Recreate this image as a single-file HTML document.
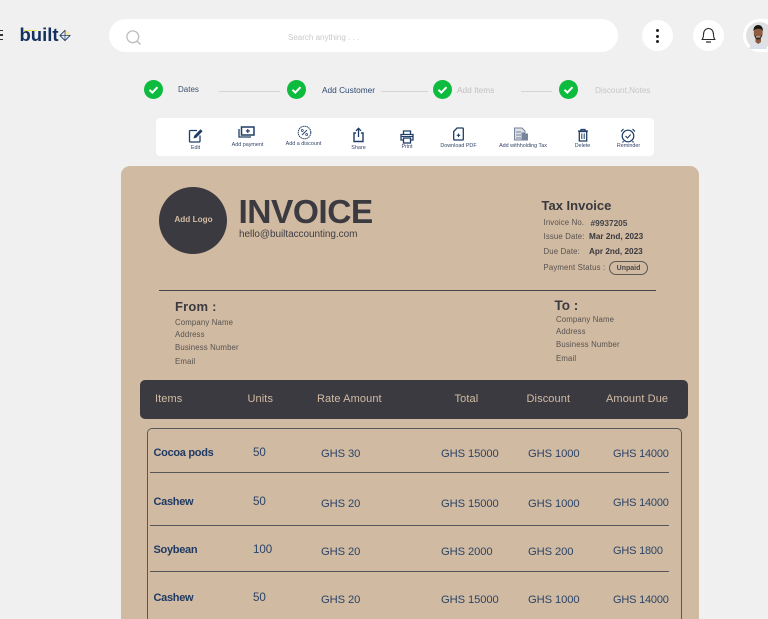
<!DOCTYPE html>
<html style="height:619px;overflow:hidden"><head><meta charset="utf-8"><style>
html,body{margin:0;padding:0}
body{width:768px;height:619px;overflow:hidden;background:#f0f0f0;position:relative;font-family:"Liberation Sans",sans-serif}
#w{position:absolute;left:0;top:0;width:768px;height:619px;overflow:hidden;background:#f0f0f0}
.t{position:absolute;white-space:nowrap;line-height:1}
.a{position:absolute}
.c{transform:translateX(-50%)}
.lbl{font-size:5.4px;color:#34456a}
.i{font-size:7.8px;color:#56524f;letter-spacing:.15px}
.h{font-size:11px;color:#d3bca3;top:394px;letter-spacing:.1px}
.nm{font-size:11px;font-weight:bold;color:#1f3a63;letter-spacing:-.3px}
.v{font-size:11.2px;color:#2a4468;letter-spacing:-.1px}
.u{font-size:11.6px;color:#2a4468;letter-spacing:-.1px}
.d{font-size:11px;color:#2a4468;letter-spacing:-.2px}
.ln{position:absolute;height:1.3px;background:#56565a;left:150px;width:519px}
</style></head><body><div id="w">
<!-- hamburger -->
<div class="a" style="left:0;top:29.500px;width:3px;height:1.700px;background:#333"></div>
<div class="a" style="left:0;top:34px;width:3px;height:1.700px;background:#333"></div>
<div class="a" style="left:0;top:38.500px;width:3px;height:1.700px;background:#333"></div>
<!-- logo -->
<div class="t" style="left:19.500px;top:26px;font-size:18.500px;font-weight:bold;color:#14315f">built</div>
<div class="a" style="left:24px;top:29.500px;width:13px;height:1.200px;background:#efe05a"></div>
<svg class="a" style="left:59px;top:29px" width="12" height="13" viewBox="0 0 13 14"><path d="M6.500 1.500L12 7 6.500 12.500 1 7Z" fill="none" stroke="#23406b" stroke-width="1"/><path d="M6.500 1.500V12.500M1 7H12" stroke="#23406b" stroke-width=".8"/><path d="M7 1.500C10 2 11.500 4 12 6.500H7Z" fill="#f1e8a8"/></svg>
<!-- search -->
<div class="a" style="left:109px;top:19px;width:509px;height:33px;border-radius:17px;background:#fff"></div>
<svg class="a" style="left:125px;top:29px" width="18" height="17" viewBox="0 0 18 17"><circle cx="7.800" cy="7.800" r="5.900" fill="none" stroke="#bdbdbd" stroke-width="1.300"/><path d="M12 12l3.500 3.500" stroke="#bdbdbd" stroke-width="1.500"/></svg>
<div class="t" style="left:288px;top:33.500px;font-size:8px;color:#c9c9c9">Search anything . . .</div>
<!-- top buttons -->
<div class="a" style="left:642px;top:20px;width:31px;height:31px;border-radius:50%;background:#fff"></div>
<div class="a" style="left:656px;top:29px;width:3px;height:3px;border-radius:50%;background:#222"></div>
<div class="a" style="left:656px;top:34.500px;width:3px;height:3px;border-radius:50%;background:#222"></div>
<div class="a" style="left:656px;top:40px;width:3px;height:3px;border-radius:50%;background:#222"></div>
<div class="a" style="left:693px;top:20px;width:31px;height:31px;border-radius:50%;background:#fff"></div>
<svg class="a" style="left:700px;top:26px" width="17" height="19" viewBox="0 0 17 19"><path d="M2 13.500c1.200-1.300 1.500-2.500 1.500-5C3.500 5 5.500 2.500 8.500 2.500S13.500 5 13.500 8.500c0 2.500.3 3.700 1.500 5Z" fill="none" stroke="#2b2b2b" stroke-width="1.100" stroke-linejoin="round"/><path d="M6.500 16h4" stroke="#2b2b2b" stroke-width="1.200" stroke-linecap="round"/></svg>
<div class="a" style="left:743px;top:19px;width:25px;height:33px;border-radius:16.500px 0 0 16.500px;background:#fff"></div>
<svg class="a" style="left:746px;top:22px" width="22" height="27" viewBox="0 0 22 27"><circle cx="13.500" cy="13.500" r="13.500" fill="#e0e0e0"/><path d="M3 27c1-5 4-7 9-7s8 2 9 7Z" fill="#dbe1e8"/><path d="M9.500 15h5.500v5l-2.800 2-2.700-2Z" fill="#8a5a3e"/><ellipse cx="12.200" cy="11" rx="4.500" ry="6" fill="#8f5d3f"/><path d="M7.500 9.500C7.200 5 9.500 3 12.200 3S17.200 5 16.900 9.500C16 7.300 14.500 6.800 12.200 6.800S8.500 7.300 7.500 9.500Z" fill="#1a1715"/><path d="M8 12c1 4.500 2.200 5.500 4.200 5.500s3.200-1 4.200-5.500c-1 2.200-2.200 2-4.200 2S9 14.200 8 12Z" fill="#33251e"/><path d="M10 14.400h4.500v1H10Z" fill="#f2efea"/></svg>
<!-- stepper -->
<svg class="a" style="left:144px;top:80px" width="19" height="19" viewBox="0 0 19 19"><circle cx="9.500" cy="9.500" r="9.500" fill="#0dbb3f"/><path d="M5.500 9.800l2.800 2.800 5.200-5.400" fill="none" stroke="#fff" stroke-width="2"/></svg>
<svg class="a" style="left:287px;top:80px" width="19" height="19" viewBox="0 0 19 19"><circle cx="9.500" cy="9.500" r="9.500" fill="#0dbb3f"/><path d="M5.500 9.800l2.800 2.800 5.200-5.400" fill="none" stroke="#fff" stroke-width="2"/></svg>
<svg class="a" style="left:433px;top:80px" width="19" height="19" viewBox="0 0 19 19"><circle cx="9.500" cy="9.500" r="9.500" fill="#0dbb3f"/><path d="M5.500 9.800l2.800 2.800 5.200-5.400" fill="none" stroke="#fff" stroke-width="2"/></svg>
<svg class="a" style="left:559px;top:80px" width="19" height="19" viewBox="0 0 19 19"><circle cx="9.500" cy="9.500" r="9.500" fill="#0dbb3f"/><path d="M5.500 9.800l2.800 2.800 5.200-5.400" fill="none" stroke="#fff" stroke-width="2"/></svg>
<div class="t" style="left:178px;top:85.500px;font-size:8px;color:#3e5074">Dates</div>
<div class="t" style="left:322px;top:85.500px;font-size:8.300px;color:#2f4a70">Add Customer</div>
<div class="t" style="left:457px;top:86px;font-size:8.300px;color:#c0c0c0">Add Items</div>
<div class="t" style="left:595px;top:86.700px;font-size:8.200px;color:#c6c6c6">Discount,Notes</div>
<div class="a" style="left:219px;top:91px;width:61px;height:1px;background:#d4d4d4"></div>
<div class="a" style="left:381px;top:91px;width:47px;height:1px;background:#d4d4d4"></div>
<div class="a" style="left:521px;top:91px;width:31px;height:1px;background:#d4d4d4"></div>
<!-- toolbar -->
<div class="a" style="left:156px;top:118px;width:498px;height:38px;border-radius:4px;background:#fff"></div>
<svg class="a" style="left:188px;top:128px" width="16" height="15" viewBox="0 0 16 15"><path d="M9 2.500H2.500a1 1 0 0 0-1 1V13a1 1 0 0 0 1 1H11a1 1 0 0 0 1-1V7.500" fill="none" stroke="#1f3d66" stroke-width="1.300"/><path d="M5.500 10.500l.7-2.800L12.500 1.200l2.100 2.100-6.300 6.500Z" fill="#1f3d66"/></svg>
<svg class="a" style="left:238px;top:126px" width="17" height="13" viewBox="0 0 17 13"><rect x="3.500" y="1" width="12.500" height="8" fill="none" stroke="#1f3d66" stroke-width="1.500"/><path d="M9.800 3v4M7.800 5h4" stroke="#1f3d66" stroke-width="1.200"/><path d="M1 3v8h12" fill="none" stroke="#1f3d66" stroke-width="1.300"/></svg>
<svg class="a" style="left:297px;top:125px" width="15" height="15" viewBox="0 0 15 15"><circle cx="7.500" cy="7.500" r="6.300" fill="none" stroke="#1f3d66" stroke-width="1" stroke-dasharray="1.500 .6"/><path d="M5 10l5-5" stroke="#1f3d66" stroke-width=".9"/><circle cx="5.300" cy="5.500" r="1" fill="none" stroke="#1f3d66" stroke-width=".7"/><circle cx="9.700" cy="9.500" r="1" fill="none" stroke="#1f3d66" stroke-width=".7"/></svg>
<svg class="a" style="left:352px;top:127px" width="13" height="16" viewBox="0 0 13 16"><path d="M4 6H2v8.500h9V6H9" fill="none" stroke="#1f3d66" stroke-width="1.400"/><path d="M6.500 10V1.500M4 3.800l2.500-2.500L9 3.800" fill="none" stroke="#1f3d66" stroke-width="1.300"/></svg>
<svg class="a" style="left:400px;top:130px" width="14" height="14" viewBox="0 0 14 14"><path d="M3.500 4V1h7v3M3.500 10H1V4.500h12V10h-2.500" fill="none" stroke="#1f3d66" stroke-width="1.300"/><rect x="3.500" y="8" width="7" height="5" fill="none" stroke="#1f3d66" stroke-width="1.300"/><path d="M1.500 6.500h11" stroke="#1f3d66" stroke-width="1"/></svg>
<svg class="a" style="left:453px;top:127px" width="11" height="14" viewBox="0 0 11 14"><path d="M4 1H9.500a.8.800 0 0 1 .8.800v10.400a.8.800 0 0 1-.8.800h-8a.8.800 0 0 1-.8-.8V4.500Z" fill="none" stroke="#1f3d66" stroke-width="1.300"/><path d="M5.500 6.500v3.500M3.800 8.300h3.400" fill="none" stroke="#1f3d66" stroke-width="1.100"/></svg>
<svg class="a" style="left:513px;top:127px" width="16" height="15" viewBox="0 0 16 15"><path d="M1.500 1H9l3 3v2H9v7H1.500Z" fill="#dde0e5" stroke="#76859b" stroke-width="1"/><rect x="9" y="6.500" width="6" height="7" fill="#76859b"/><path d="M3 5h5M3 8h5M3 11h5" stroke="#76859b" stroke-width="1"/></svg>
<svg class="a" style="left:577px;top:128px" width="12" height="14" viewBox="0 0 12 14"><path d="M1 3h10M4 3V1.500h4V3" fill="none" stroke="#1f3d66" stroke-width="1.200"/><path d="M2.300 3.500h7.400v9.500H2.300Z" fill="none" stroke="#1f3d66" stroke-width="1.300"/><path d="M4.800 5.500v5.500M7.200 5.500v5.500" stroke="#1f3d66" stroke-width="1"/></svg>
<svg class="a" style="left:620px;top:128px" width="16" height="15" viewBox="0 0 16 15"><circle cx="8" cy="8" r="5.800" fill="none" stroke="#1f3d66" stroke-width="1.200"/><path d="M5.500 8l2 2 3.200-3.500" fill="none" stroke="#1f3d66" stroke-width="1.100"/><path d="M1 3.500L3.500 1M15 3.500L12.500 1M3.500 13.200L2.500 14.500M12.500 13.200L13.500 14.500" stroke="#1f3d66" stroke-width="1.200"/></svg>
<div class="t lbl c" style="left:195.500px;top:145.500px">Edit</div>
<div class="t lbl c" style="left:247.500px;top:143px">Add payment</div>
<div class="t lbl c" style="left:303.500px;top:142px">Add a discount</div>
<div class="t lbl c" style="left:358.500px;top:145.500px">Share</div>
<div class="t lbl c" style="left:407px;top:144.500px">Print</div>
<div class="t lbl c" style="left:458.500px;top:144px">Download PDF</div>
<div class="t lbl c" style="left:523px;top:144px">Add withholding Tax</div>
<div class="t lbl c" style="left:582.500px;top:144px">Delete</div>
<div class="t lbl c" style="left:628.500px;top:143.700px">Reminder</div>
<!-- card -->
<div class="a" style="left:121px;top:166px;width:578px;height:453px;border-radius:9px 9px 0 0;background:#d1baa2"></div>
<div class="a" style="left:159px;top:187px;width:68px;height:67px;border-radius:50%;background:#3b3a41"></div>
<div class="t c" style="left:193.500px;top:215.700px;font-size:8.200px;font-weight:bold;color:#d3bca3">Add Logo</div>
<div class="t" style="left:238.500px;top:195.500px;font-size:33.500px;font-weight:bold;color:#3b3a41;letter-spacing:-.5px">INVOICE</div>
<div class="t" style="left:239px;top:230.200px;font-size:10px;color:#3f3e44;letter-spacing:-.05px">hello@builtaccounting.com</div>
<div class="t" style="left:541.500px;top:199px;font-size:13px;font-weight:bold;color:#38383e">Tax Invoice</div>
<div class="t i" style="left:543.500px;top:218.500px">Invoice No.</div>
<div class="t" style="left:590.500px;top:218.500px;font-size:8.300px;font-weight:bold;color:#444349">#9937205</div>
<div class="t i" style="left:543.500px;top:233px">Issue Date:</div>
<div class="t" style="left:589px;top:233px;font-size:8.200px;font-weight:bold;color:#38383e">Mar 2nd, 2023</div>
<div class="t i" style="left:543.500px;top:247.500px">Due Date:</div>
<div class="t" style="left:589px;top:247.500px;font-size:8.200px;font-weight:bold;color:#38383e">Apr 2nd, 2023</div>
<div class="t i" style="left:543.500px;top:263.500px">Payment Status :</div>
<div class="a" style="left:609px;top:261px;width:39px;height:14px;box-sizing:border-box;border:1px solid #5b5856;border-radius:8px"></div>
<div class="t c" style="left:628.500px;top:265px;font-size:7px;font-weight:bold;color:#4a4848">Unpaid</div>
<div class="a" style="left:159px;top:289.500px;width:497px;height:1.300px;background:#47464b"></div>
<div class="t" style="left:175px;top:300px;font-size:13px;font-weight:bold;color:#3b3a41;letter-spacing:.2px">From :</div>
<div class="t i" style="left:175px;top:318.500px">Company Name</div>
<div class="t i" style="left:175px;top:331px">Address</div>
<div class="t i" style="left:175px;top:344px">Business Number</div>
<div class="t i" style="left:175px;top:358px">Email</div>
<div class="t" style="left:554.500px;top:299px;font-size:13.500px;font-weight:bold;color:#3b3a41">To :</div>
<div class="t i" style="left:556px;top:316px">Company Name</div>
<div class="t i" style="left:556px;top:328px">Address</div>
<div class="t i" style="left:556px;top:341px">Business Number</div>
<div class="t i" style="left:556px;top:355px">Email</div>
<!-- table -->
<div class="a" style="left:140px;top:380px;width:548px;height:39px;border-radius:5px;background:#3b3a41"></div>
<div class="t h" style="left:155px">Items</div>
<div class="t h" style="left:247.500px">Units</div>
<div class="t h" style="left:317px">Rate Amount</div>
<div class="t h" style="left:454.500px">Total</div>
<div class="t h" style="left:526.500px">Discount</div>
<div class="t h" style="left:606px">Amount Due</div>
<div class="a" style="left:146.500px;top:428px;width:535px;height:191px;border:1.300px solid #57575a;border-bottom:0;border-radius:5px 5px 0 0;box-sizing:border-box"></div>
<div class="ln" style="top:471.800px"></div>
<div class="ln" style="top:524.500px"></div>
<div class="ln" style="top:571px"></div>
<div class="t nm" style="left:153.500px;top:447.500px">Cocoa pods</div>
<div class="t nm" style="left:153.500px;top:496.500px">Cashew</div>
<div class="t nm" style="left:153.500px;top:544.500px">Soybean</div>
<div class="t nm" style="left:153.500px;top:592.500px">Cashew</div>
<div class="t u" style="left:253px;top:447px">50</div>
<div class="t u" style="left:253px;top:496px">50</div>
<div class="t u" style="left:253px;top:544px">100</div>
<div class="t u" style="left:253px;top:592px">50</div>
<div class="t v" style="left:321px;top:448.500px">GHS 30</div>
<div class="t v" style="left:321px;top:498.500px">GHS 20</div>
<div class="t v" style="left:321px;top:546.500px">GHS 20</div>
<div class="t v" style="left:321px;top:594.500px">GHS 20</div>
<div class="t v" style="left:441px;top:448.500px">GHS 15000</div>
<div class="t v" style="left:441px;top:498.500px">GHS 15000</div>
<div class="t v" style="left:441px;top:546.500px">GHS 2000</div>
<div class="t v" style="left:441px;top:594.500px">GHS 15000</div>
<div class="t v" style="left:528px;top:448.500px">GHS 1000</div>
<div class="t v" style="left:528px;top:498.500px">GHS 1000</div>
<div class="t v" style="left:528px;top:546.500px">GHS 200</div>
<div class="t v" style="left:528px;top:594.500px">GHS 1000</div>
<div class="t d" style="left:613px;top:448.500px">GHS 14000</div>
<div class="t d" style="left:613px;top:498px">GHS 14000</div>
<div class="t d" style="left:613px;top:546px">GHS 1800</div>
<div class="t d" style="left:613px;top:594.500px">GHS 14000</div>
</div></body></html>
